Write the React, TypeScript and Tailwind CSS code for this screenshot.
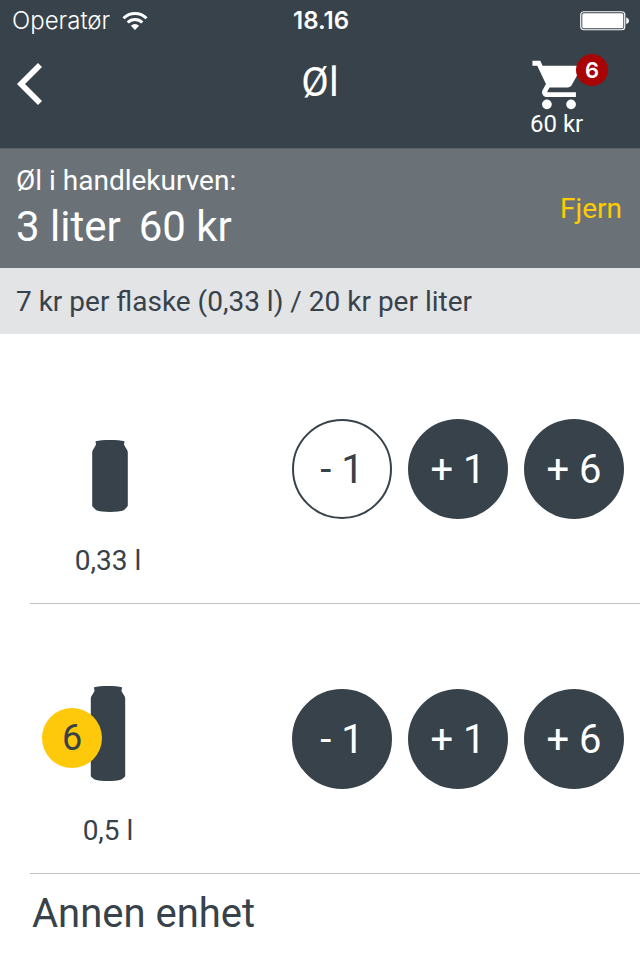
import React from 'react';

interface Unit {
  id: string;
  label: string;
  count: number;
  can: React.ReactNode;
}

const CanSmall: React.FC = () => (
  <svg width="40" height="72" viewBox="-4 0 40 72" fill="currentColor" aria-hidden="true">
    <path d="M3.500 1.200C7 .3 12 0 18 0s11 .3 14.500 1.200l-.5 3.300c.8 1.800 1.800 3 2.700 4.800.8 1.400 1.100 2.200 1.100 3.700v52c0 1.200-.3 1.700-1 2.300l-3 3C29 71.300 24 72 18 72S7 71.300 4.200 70.300l-3-3C.4 66.700.2 66.200.2 65V13c0-1.500.3-2.300 1.100-3.700C2.200 7.500 3.200 6.300 4 4.500z" />
  </svg>
);

const CanLarge: React.FC = () => (
  <svg width="36" height="96" viewBox="0 0 36 96" fill="currentColor" aria-hidden="true">
    <path d="M4 1.300C7.500.3 12 0 18 0s10.500.3 14 1.300L31.500 5c.6 1.500 1.700 2.800 2.500 4.200.8 1.300 1.200 2.300 1.200 3.800v76c0 1-.2 1.500-.8 2.200l-3 2.300C28 94.500 23 95 18 95S8 94.500 4.600 93.500l-3-2.300C1 90.500.8 90 .8 89V13c0-1.500.4-2.500 1.200-3.800C2.800 7.800 3.900 6.500 4.500 5z" />
  </svg>
);

const units: Unit[] = [
  { id: 'small', label: '0,33 l', count: 0, can: <CanSmall /> },
  { id: 'large', label: '0,5 l', count: 6, can: <CanLarge /> },
];

const StatusBar: React.FC = () => (
  <div className="grid h-[42px] grid-cols-3 items-center pl-3 pr-2.5 font-['Inter',sans-serif] text-white">
    <div className="flex items-center gap-3">
      <span className="text-2xl font-light">Operatør</span>
      <svg width="26" height="18" viewBox="0 0 26 18" fill="none" stroke="currentColor" strokeWidth="3" aria-hidden="true">
        <path d="M1.500 6.300a16.300 16.300 0 0 1 23 0" />
        <path d="M5.700 10.500a10.400 10.400 0 0 1 14.600 0" />
        <path d="M13 18l-4.100-4.200a5.800 5.800 0 0 1 8.200 0z" fill="currentColor" stroke="none" />
      </svg>
    </div>
    <span className="text-center text-2xl font-semibold">18.16</span>
    <svg className="justify-self-end" width="50" height="20" viewBox="0 0 50 20" aria-hidden="true">
      <rect x="0.750" y="0.750" width="44" height="18" rx="3" fill="none" stroke="white" strokeWidth="1.200" />
      <rect x="2.300" y="2.300" width="41" height="15" rx="1.500" fill="white" />
      <path d="M46.200 6.500c1.800.5 2.800 1.600 2.800 3.300s-1 2.800-2.800 3.300z" fill="white" />
    </svg>
  </div>
);

const Header: React.FC = () => (
  <header className="border-b border-[#59636a] bg-[#37424a] text-white">
    <StatusBar />
    <div className="grid h-[106px] grid-cols-3 items-start px-4">
      <button type="button" aria-label="Tilbake" className="mt-[18px] w-fit cursor-pointer">
        <svg width="28" height="48" viewBox="0 0 28 48" fill="none" stroke="currentColor" strokeWidth="5.700">
          <path d="M24 5L5 24l19 19" />
        </svg>
      </button>
      <h1 className="mt-[18px] text-center text-[40px] leading-[46px]">Øl</h1>
      <button type="button" className="relative mt-3.5 mr-9 flex cursor-pointer flex-col items-start justify-self-end">
        <svg width="58" height="58" viewBox="0 0 24 24" fill="currentColor" aria-hidden="true">
          <path d="M7 18c-1.100 0-1.990.9-1.990 2S5.900 22 7 22s2-.9 2-2-.9-2-2-2zM1 2v2h2l3.600 7.590-1.350 2.450c-.16.28-.25.61-.25.96 0 1.100.9 2 2 2h12v-2H7.420c-.14 0-.25-.11-.25-.25l.03-.12.9-1.630h7.450c.75 0 1.410-.41 1.750-1.030l3.580-6.490c.08-.14.12-.31.12-.48 0-.55-.45-1-1-1H5.210l-.94-2H1zm16 16c-1.100 0-1.990.9-1.990 2s.89 2 1.990 2 2-.9 2-2-.9-2-2-2z" />
        </svg>
        <span className="absolute -top-0.5 -right-5 flex size-8 items-center justify-center rounded-full bg-[#a80404] font-['Inter',sans-serif] text-[22px] font-semibold">
          6
        </span>
        <span className="-mt-3.5 text-2xl leading-12">60 kr</span>
      </button>
    </div>
  </header>
);

const CartSummary: React.FC = () => (
  <section className="flex items-center justify-between bg-[#6a7278] pt-3.5 pr-[18px] pb-[13px] pl-4 text-white">
    <div>
      <p className="text-[28px] leading-9">Øl i handlekurven:</p>
      <p className="flex gap-[18px] text-[42px] leading-14">
        <span>3 liter</span>
        <span>60 kr</span>
      </p>
    </div>
    <button type="button" className="cursor-pointer text-[28px] text-[#ffcc00]">
      Fjern
    </button>
  </section>
);

const UnitRow: React.FC<{ unit: Unit }> = ({ unit }) => {
  const empty = unit.count === 0;

  return (
    <li className="ml-[30px] flex items-center justify-between border-b border-[#bfc1c3] pr-4">
      <div className="relative flex w-[156px] flex-col items-center pb-5">
        <div className="flex h-[205px] items-end pb-[27px]">{unit.can}</div>
        <span className="text-[28px] leading-11">{unit.label}</span>
        {!empty && (
          <span className="absolute top-26 left-3 flex size-15 items-center justify-center rounded-full bg-[#ffc90b] text-4xl">
            {unit.count}
          </span>
        )}
      </div>
      <div className="flex gap-4 text-[40px]">
        <button
          type="button"
          className={`size-25 cursor-pointer rounded-full border-2 border-[#37424a] pt-0.5 ${empty ? 'bg-white' : 'bg-[#37424a] text-white'}`}
        >
          - 1
        </button>
        <button type="button" className="size-25 cursor-pointer rounded-full bg-[#37424a] pt-0.5 text-white">
          + 1
        </button>
        <button type="button" className="size-25 cursor-pointer rounded-full bg-[#37424a] pt-0.5 text-white">
          + 6
        </button>
      </div>
    </li>
  );
};

export default function App() {
  return (
    <div className="min-h-screen bg-white font-['Roboto',sans-serif] text-[#37424a]">
      <Header />
      <main>
        <CartSummary />
        <p className="bg-[#e3e4e6] px-4 pt-[13px] pb-[11px] text-[28px] leading-[42px]">
          7 kr per flaske (0,33 l) / 20 kr per liter
        </p>
        <ul>
          {units.map((unit) => (
            <UnitRow key={unit.id} unit={unit} />
          ))}
        </ul>
        <button type="button" className="block w-full cursor-pointer px-8 py-2.5 text-left text-[40px]">
          Annen enhet
        </button>
      </main>
    </div>
  );
}
